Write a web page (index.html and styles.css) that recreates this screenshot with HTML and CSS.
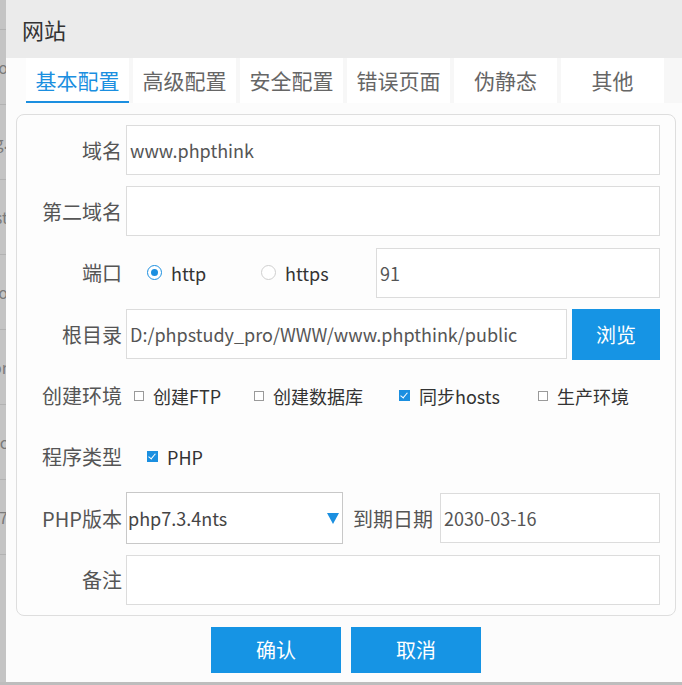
FILE: index.html
```html
<!DOCTYPE html>
<html lang="zh">
<head>
<meta charset="utf-8">
<title>网站</title>
<link rel="stylesheet" href="styles.css">
</head>
<body>
<div class="page">
  <div class="behind">
    <div class="behind-row first"></div>
    <div class="behind-row"><span>demo</span></div>
    <div class="behind-row"><span>www.baidu.org.</span></div>
    <div class="behind-row"><span>localhost</span></div>
    <div class="behind-row"><span>demo</span></div>
    <div class="behind-row"><span>phpor</span></div>
    <div class="behind-row"><span>abc</span></div>
    <div class="behind-row"><span>php7</span></div>
  </div>
  <div class="dialog">
    <div class="dlg-title">网站</div>
    <div class="tabs">
      <div class="tab active">基本配置</div>
      <div class="tab">高级配置</div>
      <div class="tab">安全配置</div>
      <div class="tab">错误页面</div>
      <div class="tab">伪静态</div>
      <div class="tab">其他</div>
    </div>
    <div class="panel">
      <div class="row">
        <span class="lbl">域名</span>
        <div class="field">www.phpthink</div>
      </div>
      <div class="row">
        <span class="lbl">第二域名</span>
        <div class="field"></div>
      </div>
      <div class="row">
        <span class="lbl">端口</span>
        <div class="radios">
          <span class="radio-item w1"><span class="radio on"></span>http</span>
          <span class="radio-item w2"><span class="radio"></span>https</span>
        </div>
        <div class="field">91</div>
      </div>
      <div class="row">
        <span class="lbl">根目录</span>
        <div class="field">D:/phpstudy_pro/WWW/www.phpthink/public</div>
        <button class="btn browse">浏览</button>
      </div>
      <div class="row">
        <span class="lbl">创建环境</span>
        <div class="checks env">
          <span class="check-item c1"><span class="box"></span>创建FTP</span>
          <span class="check-item c2"><span class="box"></span>创建数据库</span>
          <span class="check-item c3"><span class="box on"></span>同步hosts</span>
          <span class="check-item"><span class="box"></span>生产环境</span>
        </div>
      </div>
      <div class="row">
        <span class="lbl">程序类型</span>
        <div class="checks prog">
          <span class="check-item"><span class="box on"></span>PHP</span>
        </div>
      </div>
      <div class="row">
        <span class="lbl">PHP版本</span>
        <div class="select">php7.3.4nts<span class="caret"></span></div>
        <span class="lbl2">到期日期</span>
        <div class="field">2030-03-16</div>
      </div>
      <div class="row last">
        <span class="lbl">备注</span>
        <div class="field"></div>
      </div>
    </div>
    <div class="actions">
      <button class="btn act">确认</button>
      <button class="btn act">取消</button>
    </div>
  </div>
</div>
</body>
</html>
```

FILE: styles.css
```css
* { box-sizing: border-box; }
html, body { margin: 0; padding: 0; }
body {
  width: 682px;
  height: 685px;
  overflow: hidden;
  background: #bdbdbd;
  font-family: "Noto Sans CJK SC", "Noto Sans", sans-serif;
  color: #555;
}
.page {
  display: flex;
  align-items: flex-start;
  height: 685px;
}
.behind {
  width: 6px;
  flex: none;
  overflow: hidden;
  background: #c4c4c4;
  height: 682px;
}
.behind-row {
  height: 75px;
  border-bottom: 1px solid #b2b2b2;
  display: flex;
  align-items: center;
  justify-content: flex-end;
  font-size: 16px;
  color: #7a7a7a;
  white-space: nowrap;
  margin-right: -2px;
}
.behind-row.first { height: 30px; }
.dialog {
  flex: 1;
  height: 682px;
  background: #fcfcfc;
  display: flex;
  flex-direction: column;
}
.dlg-title {
  height: 58px;
  flex: none;
  background: #ebebeb;
  padding-left: 16px;
  font-size: 22px;
  line-height: 58px;
  color: #333;
}
.tabs {
  display: flex;
  flex: none;
  gap: 4px;
  margin-left: 20px;
  height: 45px;
  background: #f7f7f7;
}
.tab {
  width: 103px;
  background: #fff;
  text-align: center;
  font-size: 21px;
  line-height: 45px;
  color: #666;
}
.tab.active {
  color: #1b8fe0;
  box-shadow: inset 0 -2px 0 #1b8fe0;
}
.panel {
  flex: none;
  margin: 11px 6px 0 10px;
  background: #fdfdfd;
  border: 1px solid #dedede;
  border-radius: 8px;
  padding: 10px 15px 10px 0;
}
.row {
  display: flex;
  align-items: center;
  height: 50px;
  margin-bottom: 11.4px;
}
.row.last { margin-bottom: 0; }
.lbl {
  width: 105px;
  flex: none;
  text-align: right;
  margin-right: 4px;
  font-size: 20px;
  color: #555;
  white-space: nowrap;
}
.lbl2 {
  flex: none;
  font-size: 20px;
  color: #555;
  margin: 0 7px 0 10px;
}
.field {
  flex: 1;
  min-width: 0;
  height: 50px;
  border: 1px solid #dcdcdc;
  background: #fff;
  padding: 0 3px;
  font-size: 18px;
  line-height: 48px;
  color: #555;
  white-space: nowrap;
  overflow: hidden;
}
.radios {
  display: flex;
  padding-left: 21px;
  font-size: 18px;
  color: #333;
}
.radio-item {
  display: flex;
  align-items: center;
  gap: 9px;
}
.radio-item.w1 { width: 114px; }
.radio-item.w2 { width: 115px; }
.radio {
  width: 15px;
  height: 15px;
  border-radius: 50%;
  border: 1px solid #cfcfcf;
  background: #fff;
  display: flex;
  align-items: center;
  justify-content: center;
}
.radio.on { border-color: #1b8fe0; }
.radio.on::after {
  content: "";
  width: 7px;
  height: 7px;
  border-radius: 50%;
  background: #1b8fe0;
}
.btn {
  border: 0;
  background: #1694e4;
  color: #fff;
  font-family: inherit;
  font-size: 20px;
  cursor: pointer;
}
.browse {
  width: 88px;
  height: 51px;
  margin-left: 5px;
  flex: none;
}
.checks {
  display: flex;
  align-items: center;
  font-size: 18px;
  color: #333;
}
.checks.env { padding-left: 8px; }
.checks.prog { padding-left: 21px; }
.check-item {
  display: flex;
  align-items: center;
  gap: 9px;
}
.check-item.c1 { width: 120px; }
.check-item.c2 { width: 145px; }
.check-item.c3 { width: 139px; }
.box {
  width: 10px;
  height: 10px;
  border: 1px solid #9a9a9a;
  background: #fff;
  position: relative;
}
.box.on {
  width: 11px;
  height: 11px;
  border: 0;
  background: #1b8fe0;
}
.box.on::after {
  content: "";
  position: absolute;
  left: 3px;
  top: 1px;
  width: 3px;
  height: 6px;
  border-right: 1.5px solid #fff;
  border-bottom: 1.5px solid #fff;
  transform: rotate(40deg);
}
.select {
  width: 217px;
  flex: none;
  height: 52px;
  border: 1px solid #c8c8c8;
  background: #fff;
  padding: 0 0 0 1px;
  font-size: 18px;
  line-height: 50px;
  color: #444;
  display: flex;
  align-items: center;
  justify-content: space-between;
}
.caret {
  width: 0;
  height: 0;
  border-left: 6px solid transparent;
  border-right: 6px solid transparent;
  border-top: 11px solid #1b8fe0;
  margin-right: 3px;
}
.actions {
  display: flex;
  justify-content: center;
  gap: 10px;
  margin-top: 11px;
  padding-left: 4px;
}
.act {
  width: 130px;
  height: 46px;
}
```
